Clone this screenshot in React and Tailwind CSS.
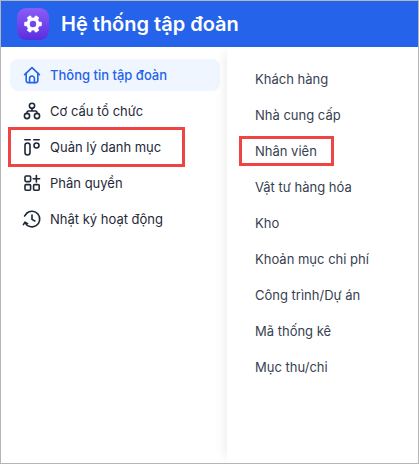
// Các icon vẽ tay theo ảnh mẫu, cùng khung 20x20
function Icon({ children }) {
  return (
    <svg width="20" height="20" viewBox="0 0 20 20" fill="none" stroke="currentColor" strokeWidth="1.6" strokeLinecap="round" strokeLinejoin="round" className="shrink-0">
      {children}
    </svg>
  );
}

function HomeIcon() {
  return (
    <Icon>
      <path d="M2.6 9.6 10 2.6l7.4 7" />
      <path d="M4.2 8.4v7.2a2 2 0 0 0 2 2h7.6a2 2 0 0 0 2-2V8.4" />
      <path d="M7.6 17.4v-4a2.4 2.4 0 0 1 4.8 0v4" />
    </Icon>
  );
}

function OrgIcon() {
  return (
    <Icon>
      <circle cx="10" cy="4.8" r="2.6" />
      <circle cx="5" cy="15" r="2.6" />
      <circle cx="15" cy="15" r="2.6" />
      <path d="M10 7.4v2.6M5 12.4v-.9A1.5 1.5 0 0 1 6.5 10h7a1.5 1.5 0 0 1 1.5 1.5v.9" />
    </Icon>
  );
}

function CatalogIcon() {
  return (
    <Icon>
      <path d="M2.8 2.8h5.4M11.8 2.8h5.4" />
      <rect x="3" y="6" width="5" height="12" rx="2.5" />
      <circle cx="14.5" cy="8.5" r="2.5" />
    </Icon>
  );
}

function PermissionIcon() {
  return (
    <Icon>
      <rect x="3" y="3" width="5.6" height="5.6" rx="1" />
      <rect x="3" y="11.6" width="5.6" height="5.6" rx="1" />
      <rect x="11.6" y="11.6" width="5.6" height="5.6" rx="1" />
      <path d="M14.4 2.6v6.4M11.2 5.8h6.4" />
    </Icon>
  );
}

function HistoryIcon() {
  return (
    <Icon>
      <path d="M4.6 4.4A7.8 7.8 0 1 1 3 13.6" />
      <path d="M4.6 4.4 2.6 7" />
      <path d="M1.4 15.6 3 13.2l2.6 1.4" />
      <path d="M10 6v4.4l2.8 1.6" />
    </Icon>
  );
}

function GearLogo() {
  return (
    <svg width="18" height="18" viewBox="-9 -9 18 18">
      <circle r="4.9" fill="none" stroke="#fff" strokeWidth="3.4" />
      {[30, 90, 150, 210, 270, 330].map((deg) => (
        <rect key={deg} x="-2.3" y="-8.8" width="4.6" height="3.4" rx="1.2" fill="#fff" transform={`rotate(${deg})`} />
      ))}
    </svg>
  );
}

const menu = [
  { label: 'Thông tin tập đoàn', icon: <HomeIcon />, active: true },
  { label: 'Cơ cấu tổ chức', icon: <OrgIcon /> },
  { label: 'Quản lý danh mục', icon: <CatalogIcon /> },
  { label: 'Phân quyền', icon: <PermissionIcon /> },
  { label: 'Nhật ký hoạt động', icon: <HistoryIcon /> },
];

const subMenu = [
  'Khách hàng',
  'Nhà cung cấp',
  'Nhân viên',
  'Vật tư hàng hóa',
  'Kho',
  'Khoản mục chi phí',
  'Công trình/Dự án',
  'Mã thống kê',
  'Mục thu/chi',
];

export default function App() {
  return (
    <div className="relative flex h-[464px] w-[419px] flex-col overflow-hidden border border-[#b5b5b5] bg-white font-['Inter',sans-serif]">
      <header className="flex h-[46px] shrink-0 items-center gap-[12px] bg-[#2563eb] pl-[16px]">
        <div className="flex size-[32px] items-center justify-center rounded-[9px] bg-gradient-to-b from-[#8b5cf6] to-[#5b2be0]">
          <GearLogo />
        </div>
        <h1 className="text-[20px] font-semibold text-white">Hệ thống tập đoàn</h1>
      </header>

      <div className="flex flex-1">
        <nav className="flex w-[226px] shrink-0 flex-col gap-[4px] py-[12px] pl-[9px] pr-[7px]">
          {menu.map((item) => (
            <div
              key={item.label}
              className={`flex h-[32px] items-center gap-[8px] rounded-[8px] pl-[12px] text-[13px] ${
                item.active ? 'bg-[#eff6ff] font-medium text-[#2563eb]' : 'text-[#1f2937]'
              }`}
            >
              {item.icon}
              <span className="translate-y-px">{item.label}</span>
            </div>
          ))}
        </nav>

        <div className="flex flex-1 flex-col gap-[4px] py-[17px] pl-[28px] shadow-[-8px_0_10px_-6px_rgba(0,0,0,0.08)]">
          {subMenu.map((name) => (
            <div key={name} className="flex h-[32px] items-center text-[13px] text-[#374151]">
              {name}
            </div>
          ))}
        </div>
      </div>

      {/* Khung đỏ chú thích */}
      <div className="absolute left-[7px] top-[126px] h-[40px] w-[177px] border-[3px] border-[#ef4444]" />
      <div className="absolute left-[238px] top-[135px] h-[30px] w-[95px] border-[3px] border-[#ef4444]" />
    </div>
  );
}
